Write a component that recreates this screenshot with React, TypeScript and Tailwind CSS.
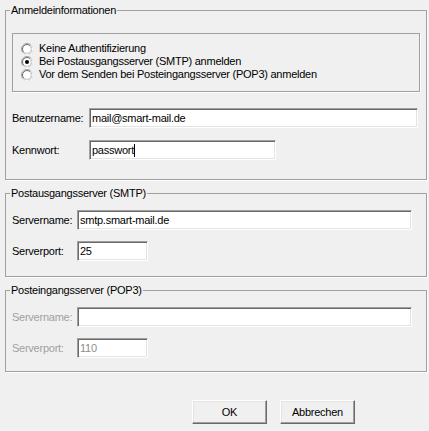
import React from 'react';

const FONT = { fontFamily: '"Liberation Sans", Arial, sans-serif' };

function Radio({ checked }: { checked?: boolean }) {
  return (
    <svg width="12" height="12" viewBox="0 0 12 12" className="shrink-0">
      <circle cx="6" cy="6" r="5.5" fill="#ffffff" stroke="#a0a0a0" />
      <path d="M 9.9 2.1 A 5.5 5.5 0 0 1 2.1 9.9" fill="none" stroke="#ffffff" />
      <circle cx="6" cy="6" r="4.5" fill="#ffffff" stroke="#696969" />
      <path d="M 9.2 2.8 A 4.5 4.5 0 0 1 2.8 9.2" fill="none" stroke="#e3e3e3" />
      {checked && <circle cx="6" cy="6" r="2" fill="#000000" />}
    </svg>
  );
}

function TextBox({
  value,
  width,
  disabled,
  caret,
}: {
  value?: string;
  width: string;
  disabled?: boolean;
  caret?: boolean;
}) {
  return (
    <div
      className={`${width} h-[20px] bg-white border border-t-[#a0a0a0] border-l-[#a0a0a0] border-r-white border-b-white shadow-[inset_1px_1px_0_#696969,inset_-1px_-1px_0_#e3e3e3] flex items-center pl-[2px] ${
        disabled ? 'text-[#8d8d8d]' : 'text-black'
      }`}
    >
      <span className="leading-[13px]">{value}</span>
      {caret && <span className="w-[1px] h-[13px] bg-black" />}
    </div>
  );
}

function Group({ title, children }: { title: string; children: React.ReactNode }) {
  return (
    <fieldset className="ml-[5px] w-[422px] border border-[#a0a0a0] p-0 m-0 min-w-0 shadow-[1px_1px_0_#ffffff]">
      <legend className="ml-[4px] px-[1px] leading-[13px] text-black">{title}</legend>
      {children}
    </fieldset>
  );
}

function Row({
  label,
  labelWidth,
  disabled,
  children,
}: {
  label: string;
  labelWidth: string;
  disabled?: boolean;
  children: React.ReactNode;
}) {
  return (
    <div className="flex items-center">
      <span className={`${labelWidth} shrink-0 ${disabled ? 'text-[#a0a0a0]' : 'text-black'}`}>{label}</span>
      {children}
    </div>
  );
}

function Button({ children }: { children: React.ReactNode }) {
  return (
    <div className="w-[75px] h-[24px] bg-[#f0f0f0] border border-t-white border-l-white border-r-[#696969] border-b-[#696969] shadow-[inset_-1px_-1px_0_#a0a0a0,inset_1px_1px_0_#e3e3e3] flex items-center justify-center text-black">
      {children}
    </div>
  );
}

export default function App() {
  return (
    <div
      className="w-[429px] h-[431px] bg-[#f0f0f0] pt-[4px] text-[11px] tracking-[-0.25px] overflow-hidden"
      style={FONT}
    >
      {/* Anmeldeinformationen */}
      <Group title="Anmeldeinformationen">
        <div className="px-[6px] pt-[16px] pb-[19px]">
          <div className="h-[59px] border border-[#a0a0a0] shadow-[1px_1px_0_#ffffff] pt-[8px] pl-[8px] flex flex-col">
            {[
              { label: 'Keine Authentifizierung' },
              { label: 'Bei Postausgangsserver (SMTP) anmelden', checked: true },
              { label: 'Vor dem Senden bei Posteingangsserver (POP3) anmelden' },
            ].map((r) => (
              <div key={r.label} className="h-[13px] flex items-center gap-[6px]">
                <Radio checked={r.checked} />
                <span className="leading-[13px] text-black">{r.label}</span>
              </div>
            ))}
          </div>

          <div className="mt-[16px] flex flex-col gap-[12px]">
            <Row label="Benutzername:" labelWidth="w-[77px]">
              <TextBox value="mail@smart-mail.de" width="w-[329px]" />
            </Row>
            <Row label="Kennwort:" labelWidth="w-[77px]">
              <TextBox value="passwort" width="w-[187px]" caret />
            </Row>
          </div>
        </div>
      </Group>

      {/* Postausgangsserver */}
      <div className="mt-[7px]">
        <Group title="Postausgangsserver (SMTP)">
          <div className="px-[6px] pt-[10px] pb-[15px] flex flex-col gap-[11px]">
            <Row label="Servername:" labelWidth="w-[65px]">
              <TextBox value="smtp.smart-mail.de" width="w-[335px]" />
            </Row>
            <Row label="Serverport:" labelWidth="w-[65px]">
              <TextBox value="25" width="w-[71px]" />
            </Row>
          </div>
        </Group>
      </div>

      {/* Posteingangsserver */}
      <div className="mt-[7px]">
        <Group title="Posteingangsserver (POP3)">
          <div className="px-[6px] pt-[10px] pb-[13px] flex flex-col gap-[11px]">
            <Row label="Servername:" labelWidth="w-[65px]" disabled>
              <TextBox value="" width="w-[335px]" disabled />
            </Row>
            <Row label="Serverport:" labelWidth="w-[65px]" disabled>
              <TextBox value="110" width="w-[71px]" disabled />
            </Row>
          </div>
        </Group>
      </div>

      {/* Buttons */}
      <div className="mt-[28px] pl-[192px] flex gap-[13px]">
        <Button>OK</Button>
        <Button>Abbrechen</Button>
      </div>
    </div>
  );
}
